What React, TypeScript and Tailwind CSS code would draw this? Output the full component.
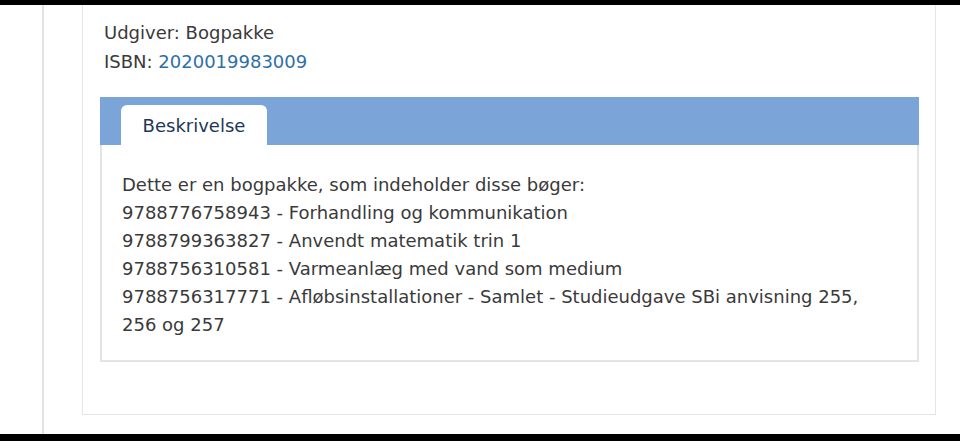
import React from 'react';

const books = [
  '9788776758943 - Forhandling og kommunikation',
  '9788799363827 - Anvendt matematik trin 1',
  '9788756310581 - Varmeanlæg med vand som medium',
  '9788756317771 - Afløbsinstallationer - Samlet - Studieudgave SBi anvisning 255, 256 og 257',
];

export default function App() {
  return (
    <div
      className="flex h-[441px] w-[960px] flex-col overflow-hidden bg-white text-[#3a3a3a]"
      style={{ fontFamily: '"DejaVu Sans", sans-serif' }}
    >
      <div className="h-[5px] w-full shrink-0 bg-black" />
      <div className="flex flex-1 items-stretch">
        <div className="ml-[42px] w-[2px] bg-[#e4e4e4]" />
        <div className="ml-[38px] flex h-[410px] w-[854px] flex-col border-x border-b border-[#e6e6e2] pl-[17px] pr-[16px]">
          <div className="pl-[4px] pt-[13px] text-[18px] leading-[29px]">
            <p>Udgiver: Bogpakke</p>
            <p>
              ISBN: <span className="text-[#2f6fa7]">2020019983009</span>
            </p>
          </div>
          <div className="mt-[21px] flex h-[48px] items-end bg-[#7ba4d8] pl-[21px]">
            <div className="flex h-[40px] w-[146px] items-center justify-center rounded-t-[6px] bg-white text-[18px] text-[#1d3658]">
              Beskrivelse
            </div>
          </div>
          <div className="border-x-2 border-b-2 border-[#e4e4e4] pb-[21px] pl-[20px] pr-[40px] pt-[26px] text-[18px] leading-[28px]">
            <p>Dette er en bogpakke, som indeholder disse bøger:</p>
            {books.map((b) => (
              <p key={b}>{b}</p>
            ))}
          </div>
        </div>
      </div>
      <div className="h-[7px] w-full shrink-0 bg-black" />
    </div>
  );
}
